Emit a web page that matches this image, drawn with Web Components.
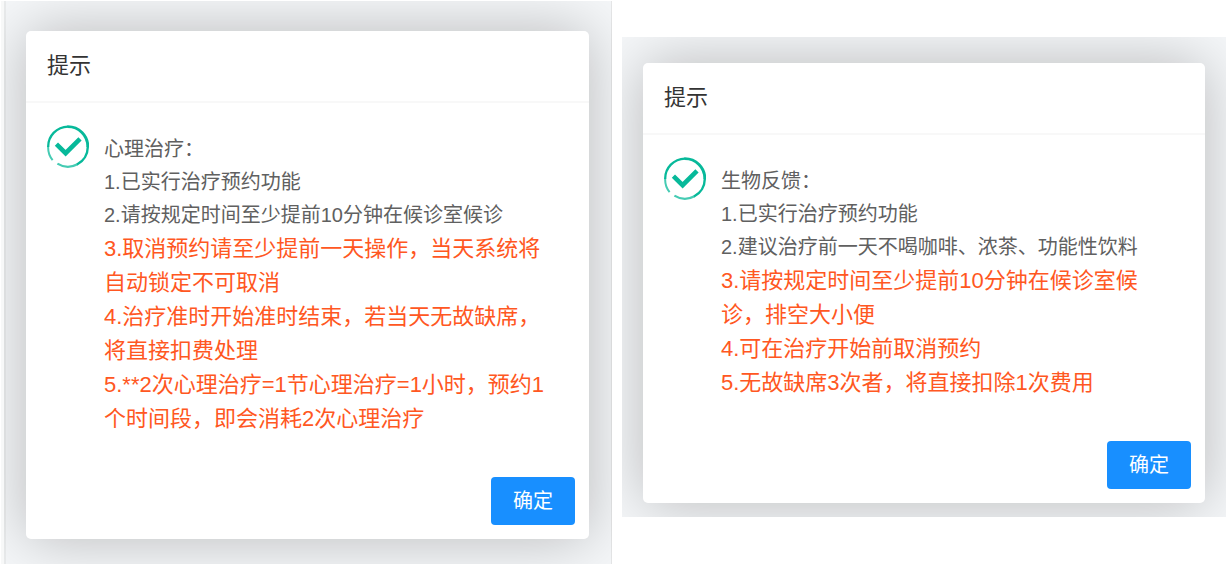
<!DOCTYPE html>
<html lang="zh-CN">
<head>
<meta charset="utf-8">
<title>提示</title>
<style>
  body { margin: 0; background: #fff; font-family: "Liberation Sans", "Noto Sans CJK SC", sans-serif; }
</style>
</head>
<body>
<notice-board>
  <modal-stage framed>
    <notice-dialog heading="提示">
      <notice-line>心理治疗：</notice-line>
      <notice-line>1.已实行治疗预约功能</notice-line>
      <notice-line>2.请按规定时间至少提前10分钟在候诊室候诊</notice-line>
      <notice-line warn>3.取消预约请至少提前一天操作，当天系统将自动锁定不可取消</notice-line>
      <notice-line warn>4.治疗准时开始准时结束，若当天无故缺席，将直接扣费处理</notice-line>
      <notice-line warn>5.**2次心理治疗=1节心理治疗=1小时，预约1个时间段，即会消耗2次心理治疗</notice-line>
    </notice-dialog>
  </modal-stage>
  <modal-stage>
    <notice-dialog heading="提示">
      <notice-line>生物反馈：</notice-line>
      <notice-line>1.已实行治疗预约功能</notice-line>
      <notice-line>2.建议治疗前一天不喝咖啡、浓茶、功能性饮料</notice-line>
      <notice-line warn>3.请按规定时间至少提前10分钟在候诊室候诊，排空大小便</notice-line>
      <notice-line warn>4.可在治疗开始前取消预约</notice-line>
      <notice-line warn>5.无故缺席3次者，将直接扣除1次费用</notice-line>
    </notice-dialog>
  </modal-stage>
</notice-board>
<script>
  class ShadowElement extends HTMLElement {
    constructor() {
      super();
      this.attachShadow({ mode: 'open' }).innerHTML = this.constructor.markup;
    }
  }

  class NoticeBoard extends ShadowElement {
    static markup = `
      <style>
        :host { display: grid; grid-template-columns: 611fr 604fr; column-gap: 10px; align-items: start;
                padding: 1px 1px 0 1px; }
        ::slotted(:nth-child(2)) { margin-top: 36px; }
      </style>
      <slot></slot>`;
  }

  class ModalStage extends ShadowElement {
    static markup = `
      <style>
        :host { display: block; box-sizing: border-box; overflow: hidden; background: #f5f7f9; padding: 26px 21px 14px 21px; }
        :host([framed]) { border-left: 3px solid #f7f8f8; box-shadow: inset 2px 0 #eaeced, inset -1px 0 #e6e7e8;
                          padding: 30px 23px 25px 22px; }
      </style>
      <slot></slot>`;
  }

  class StatusIcon extends ShadowElement {
    static markup = `
      <style>
        :host { display: block; width: 42px; height: 43px; }
        svg { display: block; }
      </style>
      <svg width="42" height="43" viewBox="0 0 42 43" fill="none" stroke="#07b99a" aria-hidden="true">
        <path d="M5.6 35.2A20 20 0 0 1 1.2 21.5" stroke-width="2" opacity=".75"/>
        <path d="M1.2 22A20 20 0 0 1 21 1.6" stroke-width="2.3"/>
        <path d="M20.5 1.6A20 20 0 0 1 40.8 22" stroke-width="2.9"/>
        <path d="M40.8 21.5A20 20 0 0 1 30 39.5" stroke-width="2.4"/>
        <path d="M30.5 39.2A20 20 0 0 1 10.4 38.6" stroke-width="2.2" opacity=".75"/>
        <path d="M9.4 19.2L18.6 28.2L33 13.8" stroke-width="4.6"/>
      </svg>`;
  }

  class NoticeLine extends ShadowElement {
    static markup = `
      <style>
        :host { display: block; font-size: 20px; line-height: 33px; color: #606060; }
        :host([warn]) { font-size: 22px; line-height: 34px; color: #ff5722; }
      </style>
      <slot></slot>`;
  }

  class NoticeDialog extends ShadowElement {
    static markup = `
      <style>
        :host { display: block; background: #fff; border-radius: 5px; box-shadow: 0 0 60px rgba(0, 0, 0, .25); }
        h2 { margin: 0; padding: 0 21px; border-bottom: 2px solid #f8f8f8; font-size: 22px; font-weight: 400;
             line-height: 70px; color: #333; }
        .body { display: flex; gap: 15px; padding: 22px 35px 0 21px; }
        .text { flex: 1; min-width: 0; padding-top: 8px; }
        footer { display: flex; justify-content: flex-end; padding: 41px 14px 14px; }
        button { border: 0; border-radius: 4px; padding: 0 22px; font: 20px/48px "Liberation Sans", "Noto Sans CJK SC", sans-serif;
                 color: #fff; background: #188fff; }
      </style>
      <h2></h2>
      <div class="body"><status-icon></status-icon><div class="text"><slot></slot></div></div>
      <footer><button type="button">确定</button></footer>`;
    connectedCallback() {
      this.shadowRoot.querySelector('h2').textContent = this.getAttribute('heading');
    }
  }

  customElements.define('status-icon', StatusIcon);
  customElements.define('notice-line', NoticeLine);
  customElements.define('notice-dialog', NoticeDialog);
  customElements.define('modal-stage', ModalStage);
  customElements.define('notice-board', NoticeBoard);
</script>
</body>
</html>
